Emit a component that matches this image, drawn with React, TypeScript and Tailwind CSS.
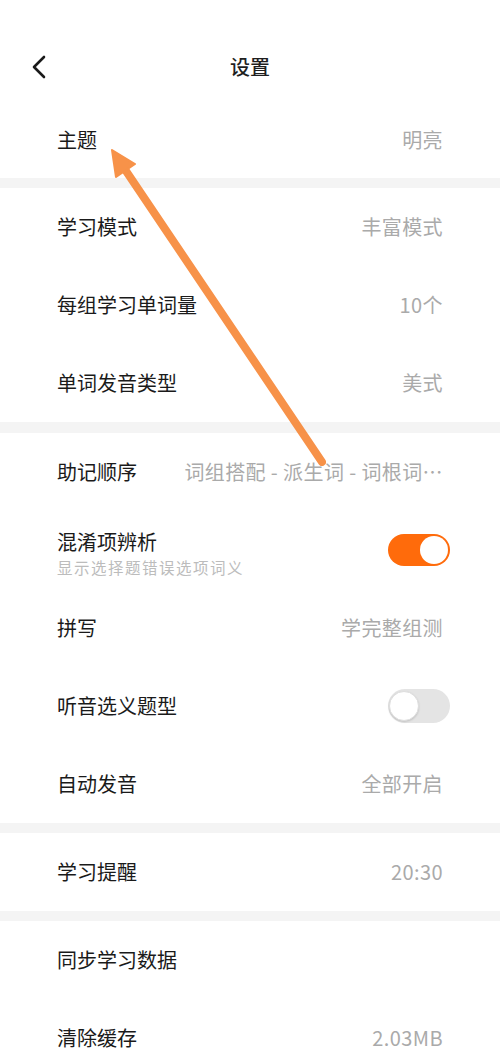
import React from "react";

type Row = {
  label: string;
  value?: string;
  sub?: string;
  toggle?: boolean;
};

const sections: Row[][] = [
  [{ label: "主题", value: "明亮" }],
  [
    { label: "学习模式", value: "丰富模式" },
    { label: "每组学习单词量", value: "10个" },
    { label: "单词发音类型", value: "美式" },
  ],
  [
    { label: "助记顺序", value: "词组搭配 - 派生词 - 词根词…" },
    { label: "混淆项辨析", sub: "显示选择题错误选项词义", toggle: true },
    { label: "拼写", value: "学完整组测" },
    { label: "听音选义题型", toggle: false },
    { label: "自动发音", value: "全部开启" },
  ],
  [{ label: "学习提醒", value: "20:30" }],
  [{ label: "同步学习数据" }, { label: "清除缓存", value: "2.03MB" }],
];

function Toggle({ on }: { on: boolean }) {
  if (on) {
    return (
      <div className="flex h-[32px] w-[62px] items-center justify-end rounded-full bg-[#ff6b0b] pr-[2px]">
        <div className="h-[28px] w-[28px] rounded-full bg-white" />
      </div>
    );
  }
  return (
    <div className="flex h-[34px] w-[62px] items-center rounded-full bg-[#e4e4e4] pl-[1px]">
      <div className="h-[30px] w-[30px] rounded-full border border-[#dedede] bg-white shadow-[0_1px_2px_rgba(0,0,0,0.15)]" />
    </div>
  );
}

function SettingRow({ row, first }: { row: Row; first?: boolean }) {
  return (
    <div className={`flex items-center justify-between pl-[57px] pr-[57px] ${first ? "h-[77px]" : "h-[78px]"}`}>
      {row.sub ? (
        <div className="flex flex-col pt-[6px]">
          <span className="text-[20px] leading-[28px] text-[#1a1a1a]">{row.label}</span>
          <span className="text-[15.5px] leading-[22px] tracking-[1.5px] text-[#bcbcbc]">{row.sub}</span>
        </div>
      ) : (
        <span className="text-[20px] leading-[28px] text-[#1a1a1a] whitespace-nowrap">{row.label}</span>
      )}
      {row.toggle !== undefined ? (
        <div className="-mr-[7px]">
          <Toggle on={row.toggle} />
        </div>
      ) : row.value ? (
        <span className="ml-[16px] whitespace-nowrap text-[20px] leading-[28px] tracking-[0.4px] text-[#aaaaaa]">
          {row.value}
        </span>
      ) : null}
    </div>
  );
}

export default function App() {
  return (
    <div
      className="relative h-[1057px] w-[500px] overflow-hidden bg-white"
      style={{ fontFamily: '"Noto Sans CJK SC", "Noto Sans", sans-serif' }}
    >
      <div className="h-[101px] pt-[50px]">
        <div className="relative flex h-[34px] items-center justify-center">
          <svg
            className="absolute left-[30px] top-[5px]"
            width="18"
            height="24"
            viewBox="0 0 18 24"
            fill="none"
            stroke="#1a1a1a"
            strokeWidth="2.6"
            strokeLinecap="round"
            strokeLinejoin="round"
          >
            <path d="M14 2 L4 12 L14 22" />
          </svg>
          <span className="text-[20px] font-medium text-[#1f1f1f]">设置</span>
        </div>
      </div>

      {sections.map((rows, i) => (
        <div key={i}>
          {i > 0 && <div className={`${i === 2 ? "h-[11px]" : "h-[10px]"} bg-[#f4f4f4]`} />}
          {rows.map((row, j) => (
            <SettingRow key={row.label} row={row} first={i === 0 && j === 0} />
          ))}
        </div>
      ))}

      <svg className="pointer-events-none absolute left-0 top-0" width="500" height="1057">
        <g opacity="0.92">
          <line x1="322" y1="462" x2="124" y2="168" stroke="#f7893a" strokeWidth="8" strokeLinecap="round" />
          <polygon points="112,150 135,164 116,177" fill="#f7893a" stroke="#f7893a" strokeWidth="2" strokeLinejoin="round" />
        </g>
      </svg>
    </div>
  );
}
